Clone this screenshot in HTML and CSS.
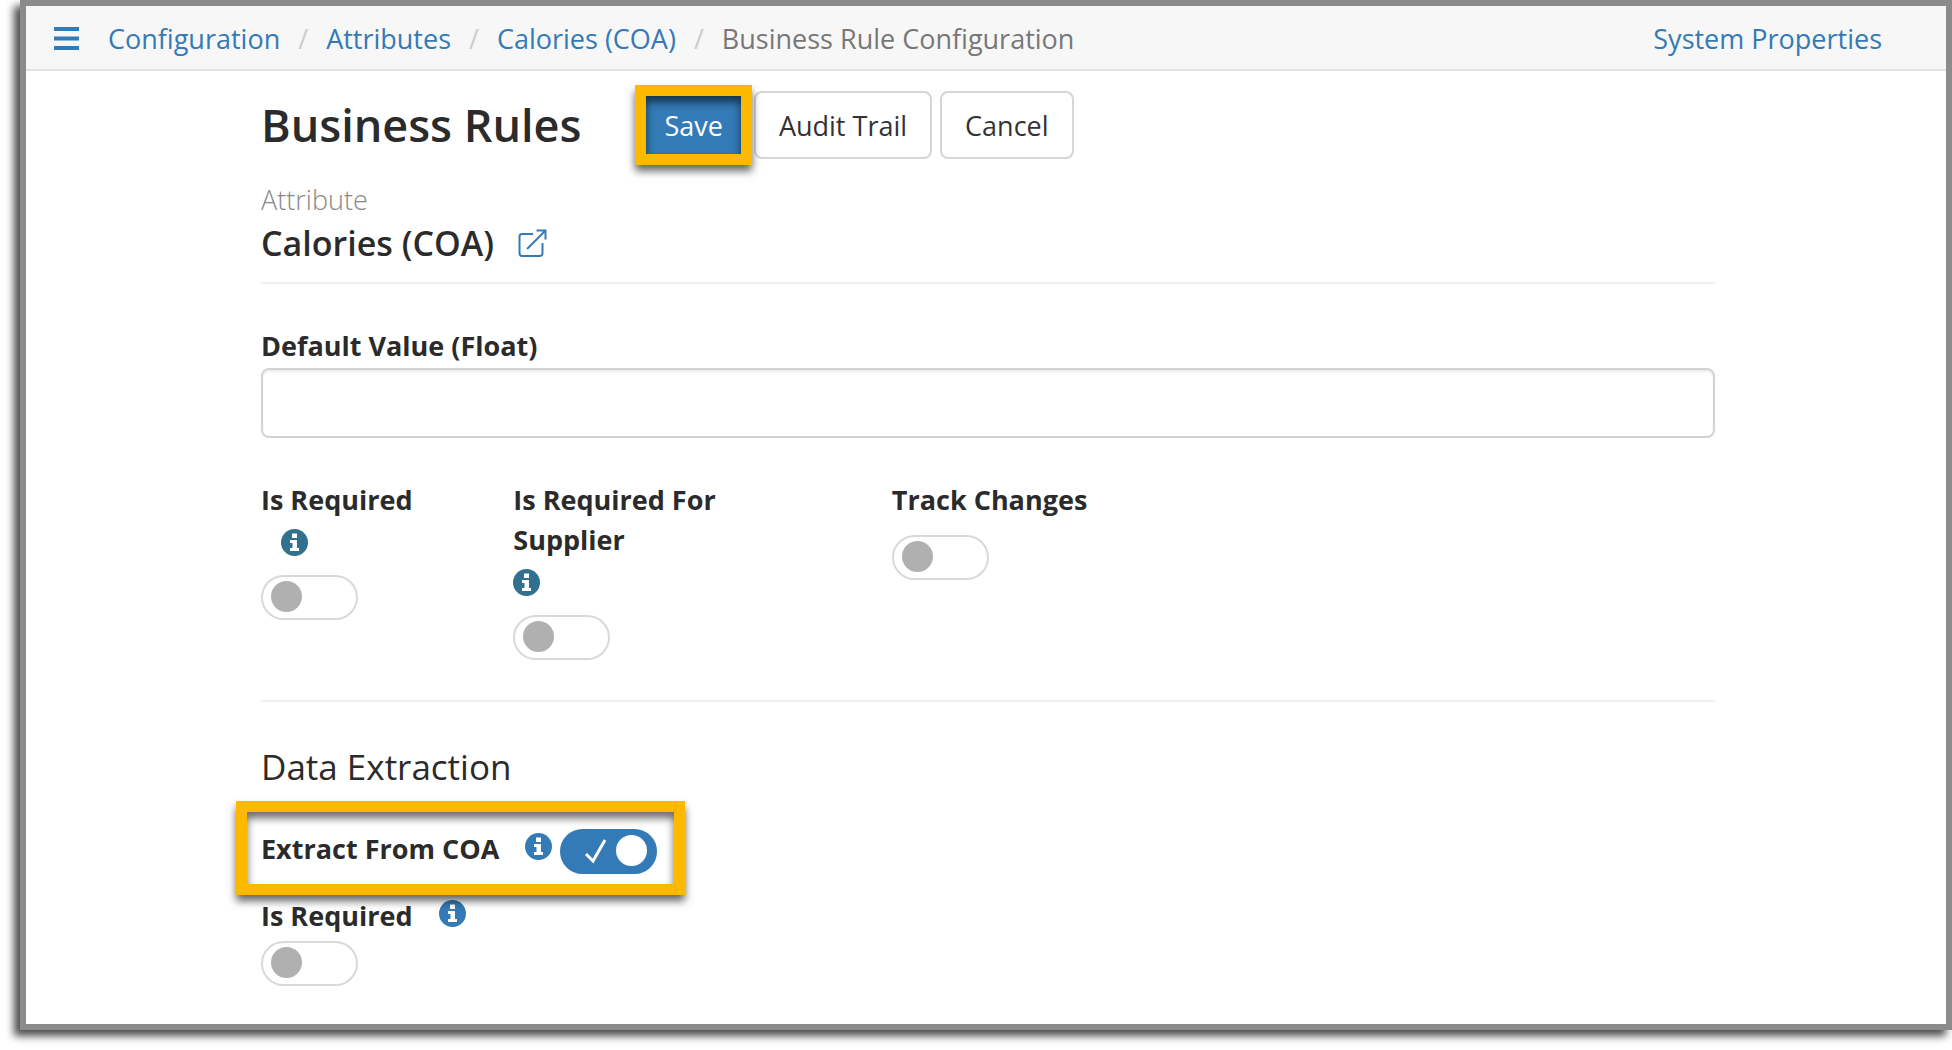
FILE: index.html
```
<!DOCTYPE html>
<html lang="en">
<head>
    <meta charset="UTF-8">
    <meta name="viewport" content="width=device-width, initial-scale=1.0">
    <title>Business Rule Configuration</title>
    <link rel="stylesheet" href="styles.css">
</head>
<body>
    <svg class="sprite" aria-hidden="true">
        <symbol id="info" viewBox="0 0 27 27">
            <circle cx="13.5" cy="13.5" r="13.5" fill="currentColor"/>
            <path fill="#fff" d="M11 4.5h5v4.5h-5zM9 11h7v8h2v3H9v-3h2.500v-5H9z"/>
        </symbol>
    </svg>

    <div class="window">
        <header class="topbar">
            <button class="menu" type="button" aria-label="Menu">
                <svg width="25" height="23" viewBox="0 0 25 23" fill="currentColor"><path d="M0 0h25v4H0zM0 9.500h25v4H0zM0 19h25v4H0z"/></svg>
            </button>
            <nav>
                <ol class="breadcrumb">
                    <li><a href="#">Configuration</a></li>
                    <li><a href="#">Attributes</a></li>
                    <li><a href="#">Calories (COA)</a></li>
                    <li>Business Rule Configuration</li>
                </ol>
            </nav>
            <a class="props" href="#">System Properties</a>
        </header>

        <main class="content">
            <div class="title-row">
                <h1>Business Rules</h1>
                <div class="actions">
                    <span class="highlight highlight-btn"><button class="btn btn-primary" type="button">Save</button></span>
                    <button class="btn" type="button">Audit Trail</button>
                    <button class="btn" type="button">Cancel</button>
                </div>
            </div>

            <div class="attribute">
                <p>Attribute</p>
                <h2>Calories (COA)
                    <a href="#" aria-label="Open attribute">
                        <svg width="29" height="29" viewBox="0 0 29 29" fill="none" stroke="currentColor" stroke-width="2"><path d="M15 5H4Q1.500 5 1.500 7.500V24Q1.500 27 4 27H21.500Q24.500 27 24.500 24V14M9 20L27 2M18.500 1.500H27.500V10.500"/></svg>
                    </a>
                </h2>
            </div>

            <hr>

            <div class="field">
                <label for="default-value">Default Value (Float)</label>
                <input class="text-input" id="default-value" type="text">
            </div>

            <div class="rules">
                <div class="rule">
                    <label for="required">Is Required</label>
                    <svg class="info info-indent"><use href="#info"/></svg>
                    <span class="toggle"><input id="required" type="checkbox"></span>
                </div>
                <div class="rule">
                    <label for="required-supplier">Is Required For<br>Supplier</label>
                    <svg class="info"><use href="#info"/></svg>
                    <span class="toggle"><input id="required-supplier" type="checkbox"></span>
                </div>
                <div class="rule">
                    <label for="track">Track Changes</label>
                    <span class="toggle"><input id="track" type="checkbox"></span>
                </div>
            </div>

            <hr>

            <section class="extraction">
                <h3>Data Extraction</h3>
                <div class="highlight highlight-row">
                    <label for="extract">Extract From COA</label>
                    <svg class="info"><use href="#info"/></svg>
                    <span class="toggle">
                        <input id="extract" type="checkbox" checked>
                        <svg class="tick" width="22" height="25" viewBox="0 0 22 25" fill="none" stroke="#fff" stroke-width="3"><path d="M1 15L8 22L20 1"/></svg>
                    </span>
                </div>
                <div class="inline-rule">
                    <label for="extract-required">Is Required</label>
                    <svg class="info"><use href="#info"/></svg>
                </div>
                <span class="toggle"><input id="extract-required" type="checkbox"></span>
            </section>
        </main>
    </div>
</body>
</html>
```
FILE: styles.css
```
* {
    box-sizing: border-box;
}

body {
    margin: 0;
    padding: 0 0 20px 20px;
    background: #fff;
    color: #2b2b2b;
    font-family: "Open Sans", "Noto Sans", sans-serif;
    font-size: 27px;
    line-height: 40px;
    overflow-x: hidden;
}

h1, h2, h3, p, ol {
    margin: 0;
    padding: 0;
}

a {
    color: #337ab7;
    text-decoration: none;
}

.sprite {
    position: absolute;
    width: 0;
    height: 0;
}

.window {
    min-height: calc(100vh - 20px);
    border: 6px solid #8b8b8b;
    box-shadow: -6px 6px 8px rgba(0, 0, 0, 0.7);
}

/* top bar */
.topbar {
    display: flex;
    align-items: center;
    height: 65px;
    padding: 2px 64px 0 28px;
    background: #f7f7f7;
    border-bottom: 2px solid #e2e2e2;
}

.menu {
    display: flex;
    margin-right: 29px;
    padding: 0;
    border: none;
    background: none;
    color: #337ab7;
}

.breadcrumb {
    display: flex;
    list-style: none;
    color: #777;
}

.breadcrumb li + li::before {
    content: "/";
    padding: 0 18px;
    color: #ccc;
}

.props {
    margin-left: auto;
}

/* page content */
.content {
    padding: 20px 231px 30px 235px;
}

.title-row {
    display: flex;
    align-items: center;
    height: 68px;
}

h1 {
    font-size: 45px;
    font-weight: 600;
    line-height: 60px;
}

.actions {
    display: flex;
    gap: 8px;
    margin-left: 60px;
}

.btn {
    height: 68px;
    padding: 2px 23px 0;
    border: 2px solid #d5d5d5;
    border-radius: 8px;
    background: #fff;
    color: #333;
    font: inherit;
}

.btn-primary {
    padding: 2px 21px 0;
    border-color: #2e6da4;
    background: #337ab7;
    color: #fff;
}

/* yellow callout frame drawn over its content */
.highlight {
    position: relative;
}

.highlight::after {
    content: "";
    position: absolute;
    border: 11px solid #fcb900;
    box-shadow: 0 6px 8px rgba(0, 0, 0, 0.6), inset 0 6px 8px rgba(0, 0, 0, 0.6);
    pointer-events: none;
}

.highlight-btn::after {
    inset: -6px;
}

.attribute {
    margin-top: 21px;
}

.attribute p {
    color: #888;
    font-weight: 300;
}

h2 {
    display: flex;
    align-items: center;
    gap: 24px;
    font-size: 34px;
    font-weight: 600;
    line-height: 46px;
}

h2 a {
    display: flex;
}

hr {
    height: 2px;
    margin: 0;
    border: none;
    background: #f0f0f0;
}

.attribute + hr {
    margin-top: 16px;
}

label {
    font-weight: 700;
}

.field {
    display: flex;
    flex-direction: column;
    margin-top: 42px;
}

.text-input {
    width: 100%;
    height: 70px;
    margin-top: 2px;
    padding: 0 24px;
    border: 2px solid #d3d3d3;
    border-radius: 8px;
    box-shadow: inset 0 2px 2px rgba(0, 0, 0, 0.075);
    font: inherit;
}

.rules {
    display: grid;
    grid-template-columns: 2fr 3fr 7fr;
    margin: 42px -30px 40px;
}

.rule {
    display: flex;
    flex-direction: column;
    align-items: flex-start;
    padding: 0 30px;
}

.info {
    width: 27px;
    height: 27px;
    margin: 9px 0 4px;
    color: #31708f;
}

.info-indent {
    margin-left: 20px;
}

.toggle {
    position: relative;
    display: flex;
    width: 97px;
}

.rule .toggle {
    margin-top: 15px;
}

.toggle input {
    width: 97px;
    height: 45px;
    margin: 0;
    padding: 4px 8px;
    border: 2px solid #d9d9d9;
    border-radius: 23px;
    background: #fff;
    appearance: none;
}

.toggle input::before {
    content: "";
    display: block;
    width: 31px;
    height: 31px;
    border-radius: 50%;
    background: #b0b0b0;
}

.toggle input:checked {
    border-color: #337ab7;
    background: #337ab7;
}

.toggle input:checked::before {
    margin-left: auto;
    background: #fff;
}

.tick {
    position: absolute;
    left: 25px;
    top: 10px;
}

/* data extraction */
h3 {
    font-size: 35px;
    font-weight: 400;
    line-height: 50px;
}

.extraction {
    margin-top: 40px;
}

.extraction .info {
    margin: 4px 0 0;
    color: #337ab7;
}

.highlight-row {
    display: flex;
    align-items: flex-start;
    width: fit-content;
    margin-top: 37px;
}

.highlight-row .info {
    margin: 4px 8px 0 26px;
}

.highlight-row::after {
    inset: -28px -28px -21px -25px;
}

.inline-rule {
    display: flex;
    align-items: flex-start;
    gap: 26px;
    margin: 22px 0 5px;
}
```
